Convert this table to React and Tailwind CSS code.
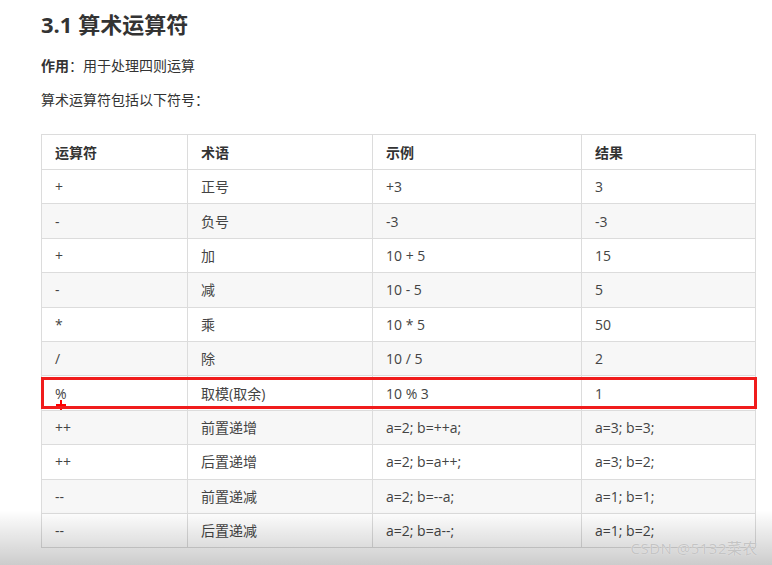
import React from 'react';

const rows = [
  ['+', '正号', '+3', '3'],
  ['-', '负号', '-3', '-3'],
  ['+', '加', '10 + 5', '15'],
  ['-', '减', '10 - 5', '5'],
  ['*', '乘', '10 * 5', '50'],
  ['/', '除', '10 / 5', '2'],
  ['%', '取模(取余)', '10 % 3', '1'],
  ['++', '前置递增', 'a=2; b=++a;', 'a=3; b=3;'],
  ['++', '后置递增', 'a=2; b=a++;', 'a=3; b=2;'],
  ['--', '前置递减', 'a=2; b=--a;', 'a=1; b=1;'],
  ['--', '后置递减', 'a=2; b=a--;', 'a=1; b=2;'],
];

export default function App() {
  return (
    <div
      className="relative w-[772px] h-[565px] overflow-hidden bg-white text-[#333] pl-[41px] flex flex-col items-start"
      style={{ fontFamily: '"Open Sans", "Noto Sans CJK SC", sans-serif' }}
    >
      {/* Heading */}
      <h3 className="pt-[9px] text-[22px] leading-[30px] font-bold text-[#333]">3.1 算术运算符</h3>
      <p className="mt-[15px] text-[14px] leading-[24px]">
        <b className="font-bold">作用</b>：用于处理四则运算
      </p>
      <p className="mt-[10px] text-[14px] leading-[24px]">算术运算符包括以下符号：</p>

      {/* Table */}
      <table className="mt-[22px] w-[715px] border-collapse text-[14px] text-[#444]">
        <thead>
          <tr className="h-[35px]">
            <th className="w-[146px] border border-[#dcdcdc] px-[13px] text-left font-bold text-[#333]">运算符</th>
            <th className="w-[185px] border border-[#dcdcdc] px-[13px] text-left font-bold text-[#333]">术语</th>
            <th className="w-[209px] border border-[#dcdcdc] px-[13px] text-left font-bold text-[#333]">示例</th>
            <th className="border border-[#dcdcdc] px-[13px] text-left font-bold text-[#333]">结果</th>
          </tr>
        </thead>
        <tbody>
          {rows.map((r, i) => (
            <tr key={i} className={`h-[34.4px] ${i % 2 === 1 ? 'bg-[#f7f7f7]' : 'bg-white'}`}>
              {r.map((c, j) => (
                <td key={j} className="border border-[#dcdcdc] px-[13px] relative">
                  {c}
                  {i === 6 && j === 0 && (
                    <span className="absolute left-[14px] bottom-0 w-[10px] h-[10px] pointer-events-none">
                      <span className="absolute left-[4px] top-0 w-[2px] h-[10px] bg-[#f00]" />
                      <span className="absolute left-0 top-[4px] w-[10px] h-[2px] bg-[#f00]" />
                    </span>
                  )}
                </td>
              ))}
            </tr>
          ))}
        </tbody>
      </table>

      {/* Red highlight box */}
      <div className="absolute left-[41px] top-[377px] w-[716px] h-[32px] border-[3px] border-[#f01c1c] pointer-events-none" />

      {/* Video bottom shade */}
      <div className="absolute left-0 right-0 bottom-0 h-[55px] bg-gradient-to-b from-transparent to-[#000]/20 pointer-events-none" />

      {/* Watermark */}
      <div
        className="absolute right-[14px] bottom-[8px] text-[15px] leading-[18px] text-[#c4c4c4] tracking-[0.5px]"
        style={{ textShadow: '0 0 1px #f4f4f4' }}
      >
        CSDN @5132菜农
      </div>
    </div>
  );
}
